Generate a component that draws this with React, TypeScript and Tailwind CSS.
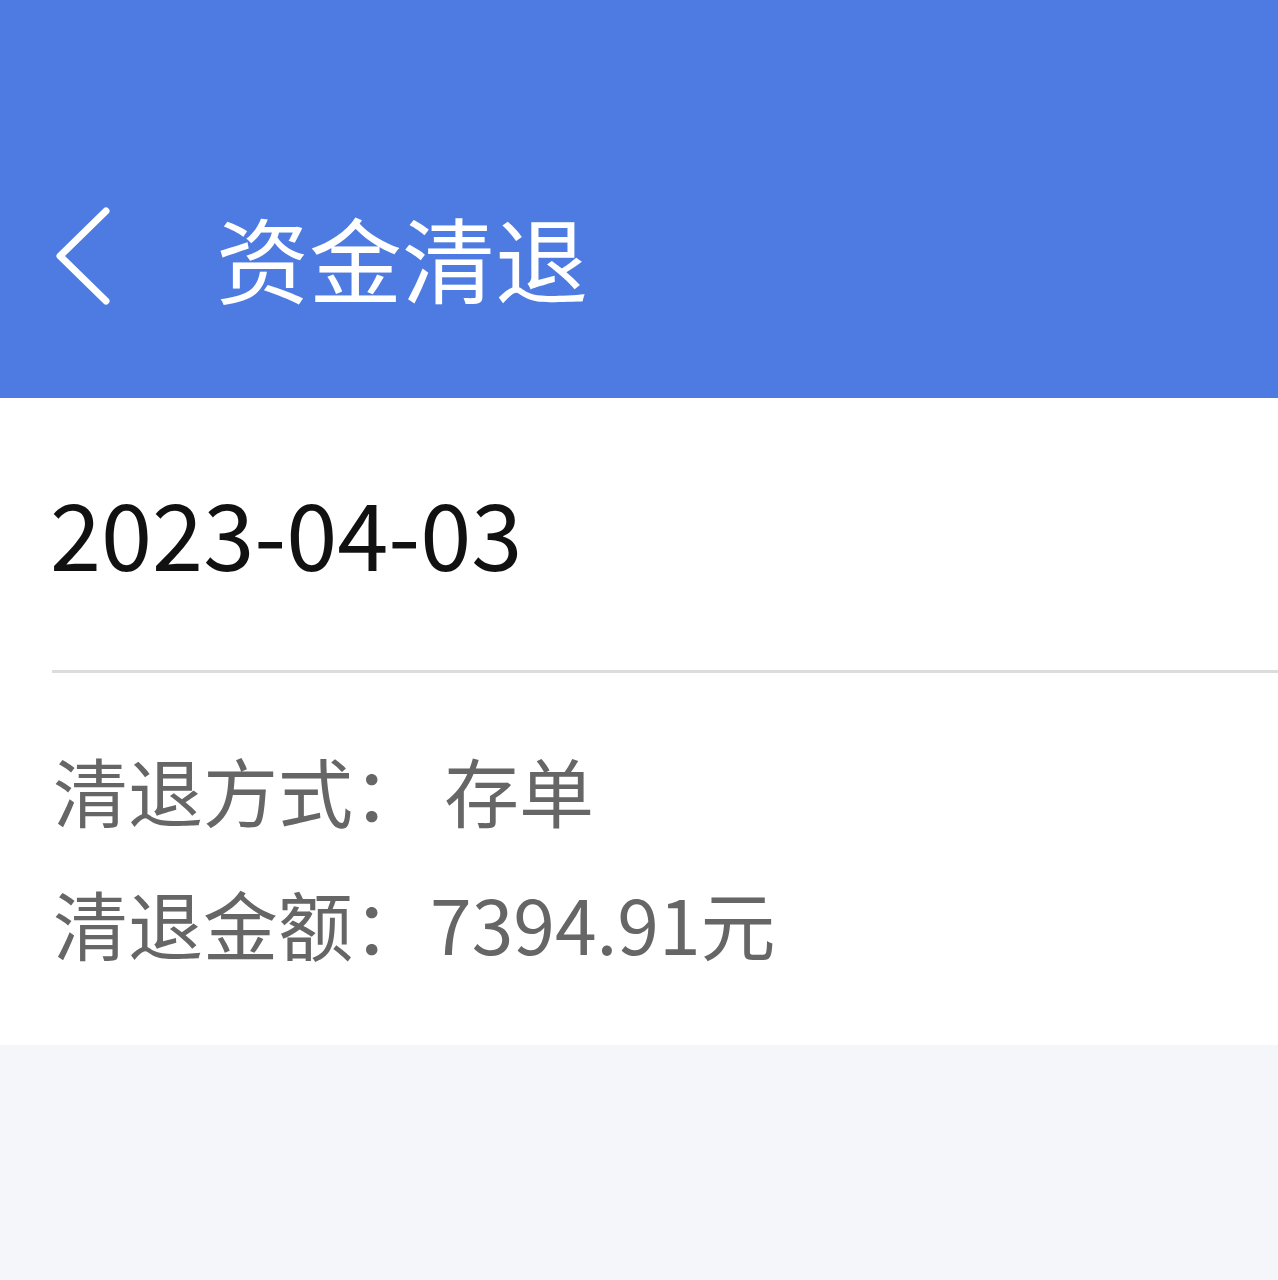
export default function App() {
  return (
    <div
      className="min-h-[1280px] w-full bg-[#f5f6fa]"
      style={{ fontFamily: '"Noto Sans CJK SC", "Noto Sans", sans-serif' }}
    >
      {/* Top bar */}
      <div className="h-[398px] bg-[#4e7be1] flex items-end pb-[92px]">
        <div className="flex items-center h-[100px] w-full">
          <svg className="ml-[52px] w-[62px] h-[100px]" viewBox="0 0 62 100" fill="none">
            <path d="M54 5 L8 50 L54 95" stroke="#ffffff" strokeWidth="7" strokeLinecap="round" strokeLinejoin="round" />
          </svg>
          <h1 className="ml-[102px] text-[93px] leading-none text-white">资金清退</h1>
        </div>
      </div>

      {/* Detail card */}
      <div className="bg-white">
        <div className="h-[272px] flex items-center pl-[50px] pb-[6px]">
          <span className="text-[92px] leading-none text-[#111111]">2023-04-03</span>
        </div>
        <div className="ml-[52px] h-[3px] bg-[#dcdcdc]" />
        <div className="pt-[50px] pb-[56px] pl-[53px] text-[75px] leading-none text-[#666666]">
          <div className="h-[133px] flex items-center">
            <span>清退方式：</span>
            <span className="pl-[16px]">存单</span>
          </div>
          <div className="h-[133px] flex items-center">
            <span>清退金额：</span>
            <span className="pl-[2px]">7394.91元</span>
          </div>
        </div>
      </div>
    </div>
  )
}
